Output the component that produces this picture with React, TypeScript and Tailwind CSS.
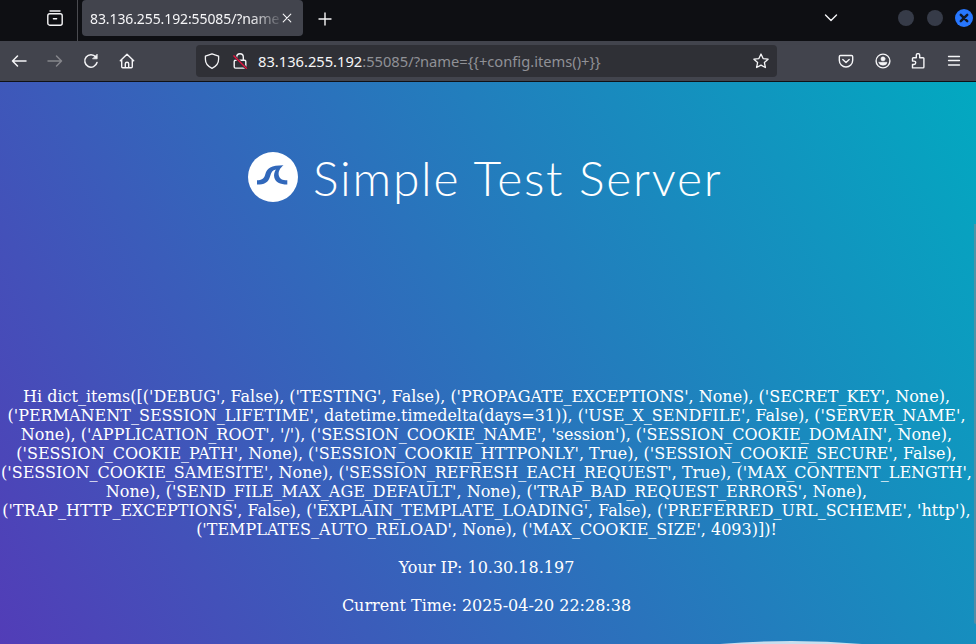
import type { ReactNode } from "react";

function Icon({ children, className = "", w = 1.25 }: { children: ReactNode; className?: string; w?: number }) {
  return (
    <svg viewBox="0 0 16 16" className={`size-4 shrink-0 ${className}`} fill="none" stroke="currentColor" strokeWidth={w} strokeLinecap="round" strokeLinejoin="round">
      {children}
    </svg>
  );
}

function TabBar() {
  return (
    <div className="flex h-[41px] shrink-0 bg-[#0e0f13]">
      <div className="flex w-[78px] border-r border-[#4a4b50] pt-[10px] pl-[47px]">
        <Icon w={1.4}>
          <path d="M3 1h10" />
          <rect x="0.8" y="3.7" width="14.4" height="11.5" rx="2" />
          <path d="M6.4 8.8h3.2" />
        </Icon>
      </div>
      <div className="ml-1 flex h-9 w-[221px] items-center rounded-b rounded-t-[4px] bg-[#42444d] pl-2">
        <span className="w-[190px] whitespace-nowrap text-[14px] tracking-[-0.1px] [mask-image:linear-gradient(to_right,black_160px,transparent_194px)]">83.136.255.192:55085/?name</span>
        <Icon className="ml-[-1px]" w={1.1}>
          <path d="m4.2 4.2 7.6 7.6M11.800 4.200 4.200 11.800" />
        </Icon>
      </div>
      <Icon className="mt-[11px] ml-[13.5px]" w={1.4}>
        <path d="M8 2v12M2 8h12" />
      </Icon>
      <Icon className="mt-[10px] ml-[490px]" w={1.4}>
        <path d="m2.5 5 5.5 5.5L13.500 5" />
      </Icon>
      <div className="mt-[10px] ml-[59px] size-4 rounded-full bg-[#363b48]" />
      <div className="mt-[10px] ml-[13px] size-4 rounded-full bg-[#363b48]" />
      <div className="mt-[9px] ml-[12px] flex size-[18px] items-center justify-center rounded-full bg-[#2777ff] text-[#101726]">
        <Icon w={2.5}>
          <path d="m4.8 4.800 6.400 6.400M11.200 4.800l-6.400 6.400" />
        </Icon>
      </div>
    </div>
  );
}

function NavBar() {
  return (
    <div className="flex h-[41px] shrink-0 items-center border-b border-[#101116] bg-[#42444d] pl-[11px]">
      <Icon w={1.5}><path d="M15 8H1.500M6.500 3l-5 5 5 5" /></Icon>
      <Icon className="ml-5 text-[#85868b]" w={1.5}><path d="M1 8h13.500M9.500 3l5 5-5 5" /></Icon>
      <Icon className="ml-5" w={1.5}>
        <path d="M14 9.500A6.200 6.200 0 1 1 12.800 4" />
        <path d="M14.200 1.500v4.300H9.900Z" fill="currentColor" strokeWidth="0.7" />
      </Icon>
      <Icon className="ml-[19.5px]" w={1.4}>
        <path d="M1.300 7.800 8 1.200l6.700 6.600M2.700 6.500v7.300q0 1 1 1h8.600q1 0 1-1V6.500M6.300 14.500v-3.800q0-1.400 1.700-1.400t1.700 1.400v3.800" />
      </Icon>
      <div className="ml-[61.5px] flex h-8 w-[581px] items-center rounded bg-[#2f3036] pl-2">
        <Icon w={1.3}><path d="M8 .8 14.600 3.100v3.200c0 4-2.500 7.200-6.600 9-4.100-1.800-6.600-5-6.600-9V3.100Z" /></Icon>
        <svg viewBox="0 0 16 16" className="ml-3 size-4 shrink-0" fill="none" stroke="currentColor" strokeWidth="1.400">
          <rect x="2.200" y="7.300" width="11.600" height="7.800" rx="1.300" />
          <path d="M4.700 7V4a3.300 3.300 0 0 1 6.600 0v3" />
          <path d="M1.500 2.500 14.800 15.700" stroke="#2f3036" strokeWidth="2.800" />
          <path d="M1.500 2.500 14.800 15.700" stroke="#e8123f" strokeWidth="1.400" />
        </svg>
        <span className="ml-[10px] w-[495px] whitespace-pre text-[14.7px] text-[#909196]">
          <span className="text-[#f5f5f7]">83.136.255.192</span>:55085/?name={"{{+config.items()+}}"}
        </span>
        <Icon w={1.300}><path d="m8 1 2.100 4.600 5 .6-3.700 3.400 1 4.900L8 12.100l-4.400 2.400 1-4.900L.9 6.200l5-.6Z" /></Icon>
      </div>
      <Icon className="ml-[61px]" w={1.400}>
        <path d="M2.500 2.500h11q1.200 0 1.200 1.200v3.600a6.700 6.700 0 0 1-13.400 0V3.700q0-1.200 1.200-1.200ZM4.800 6.500 8 9.500l3.200-3" />
      </Icon>
      <Icon className="ml-[20.5px]" w={1.400}>
        <circle cx="8" cy="8" r="6.900" />
        <circle cx="8" cy="5.900" r="2.100" fill="currentColor" strokeWidth="0.500" />
        <path d="M4 9.300h8q0 3-4 3t-4-3Z" fill="currentColor" strokeWidth="0.500" />
      </Icon>
      <Icon className="ml-[19.5px]" w={1.400}>
        <path d="M2.500 14.900v-3.400H4a1.700 1.700 0 0 0 0-3.400H2.500V5.600q0-.8.800-.8h3V2.300a1.700 1.700 0 0 1 3.400 0v2.500h3.400q.8 0 .8.800v8.500q0 .8-.8.800Z" />
      </Icon>
      <Icon className="ml-[19.5px]" w={1.300}><path d="M2.500 3.500h11M2.500 7.500h11M2.500 12h11" /></Icon>
    </div>
  );
}

function Logo() {
  return (
    <svg viewBox="0 0 50 50" className="mr-[15px] size-[50px]">
      <circle cx="25" cy="25" r="25" fill="white" />
      <path d="M9 28.300c4.500 0 7-1.200 8.300-6 1.800-6.300 5.500-9 18.200-9-3.300 2.600-5.700 6.300-4.600 10.500.8 3.100 3.300 4.500 8.400 4.500v4.200c-7.400 0-12-2.500-13-7-.7-3.100.2-5.700 1.600-8-3.300.7-4.700 2.700-5.700 6.400-1.800 6.700-5.900 8.600-13.200 8.600Z" fill="#3168bb" />
    </svg>
  );
}

const lines = [
  "Hi dict_items([('DEBUG', False), ('TESTING', False), ('PROPAGATE_EXCEPTIONS', None), ('SECRET_KEY', None),",
  "('PERMANENT_SESSION_LIFETIME', datetime.timedelta(days=31)), ('USE_X_SENDFILE', False), ('SERVER_NAME',",
  "None), ('APPLICATION_ROOT', '/'), ('SESSION_COOKIE_NAME', 'session'), ('SESSION_COOKIE_DOMAIN', None),",
  "('SESSION_COOKIE_PATH', None), ('SESSION_COOKIE_HTTPONLY', True), ('SESSION_COOKIE_SECURE', False),",
  "('SESSION_COOKIE_SAMESITE', None), ('SESSION_REFRESH_EACH_REQUEST', True), ('MAX_CONTENT_LENGTH',",
  "None), ('SEND_FILE_MAX_AGE_DEFAULT', None), ('TRAP_BAD_REQUEST_ERRORS', None),",
  "('TRAP_HTTP_EXCEPTIONS', False), ('EXPLAIN_TEMPLATE_LOADING', False), ('PREFERRED_URL_SCHEME', 'http'),",
  "('TEMPLATES_AUTO_RELOAD', None), ('MAX_COOKIE_SIZE', 4093)])!",
];

export default function App() {
  return (
    <div className="flex h-[644px] w-[976px] flex-col overflow-hidden font-['Noto_Sans',sans-serif] text-[#f5f5f7]">
      <TabBar />
      <NavBar />
      <main className="relative h-[562px] shrink-0 overflow-hidden text-white">
        <div className="-mt-[60px] h-[681px] w-[976px] bg-[linear-gradient(60deg,#543ab7_0%,#00acc1_100%)] pt-[60px] pr-[3px]">
          <h1 className="flex h-[190px] items-center pl-[248px] font-['Lato',sans-serif] text-[48px] font-light tracking-[1.75px] whitespace-nowrap">
            <Logo />
            <span className="pt-px">Simple Test Server</span>
          </h1>
          <div className="pt-[115px] text-center font-['DejaVu_Serif',serif] text-[16px] leading-[19px]">
            {lines.map((line) => (
              <p key={line} className="flex justify-center whitespace-nowrap">{line}</p>
            ))}
            <p className="mt-[19px]">Your IP: 10.30.18.197</p>
            <p className="mt-[19px]">Current Time: 2025-04-20 22:28:38</p>
          </div>
        </div>
        <svg viewBox="0 0 976 4" className="absolute bottom-0 left-0 h-1 w-[976px]">
          <path d="M720 4Q792-2 862 4Z" fill="white" fillOpacity="0.750" />
        </svg>
        <div className="absolute right-0 bottom-5 h-[400px] w-[2px] rounded-bl-sm bg-[#7d8a96]/60" />
      </main>
    </div>
  );
}
